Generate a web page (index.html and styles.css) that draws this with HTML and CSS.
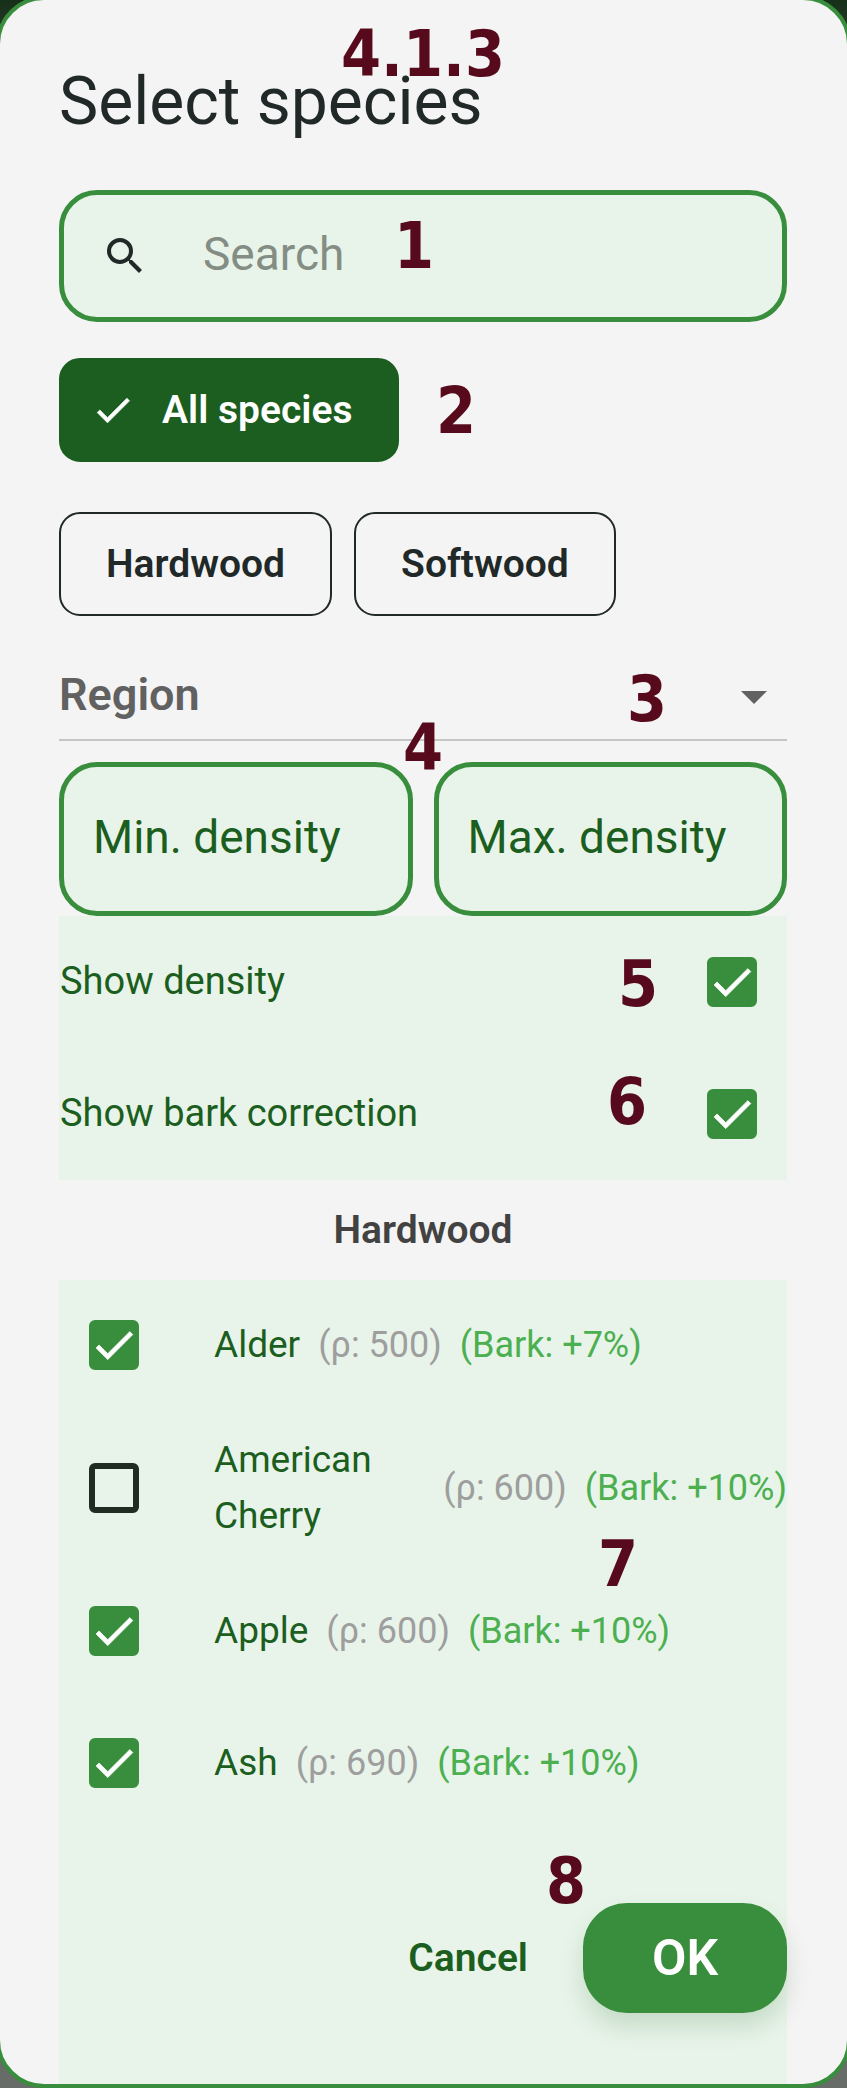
FILE: index.html
```html
<!DOCTYPE html>
<html lang="en">
<head>
<meta charset="utf-8">
<meta name="viewport" content="width=device-width, initial-scale=1">
<title>Select species</title>
<link rel="stylesheet" href="styles.css">
</head>
<body>
<svg class="defs" width="0" height="0" aria-hidden="true">
  <symbol id="tick" viewBox="0 0 24 24"><path d="M9 16.17 4.83 12l-1.42 1.41L9 19 21 7l-1.41-1.41z"/></symbol>
</svg>
<main class="dialog">
  <header class="title-bar">
    <h1 class="title">Select species</h1>
    <span class="marker marker-section">4.1.3</span>
  </header>

  <div class="search anchor">
    <svg class="search-icon" viewBox="0 0 24 24" aria-hidden="true"><path d="M15.5 14h-.79l-.28-.27A6.47 6.47 0 0 0 16 9.5 6.5 6.5 0 1 0 9.5 16c1.61 0 3.09-.59 4.23-1.57l.27.28v.79l5 4.99L20.49 19l-4.99-5zm-6 0a4.5 4.5 0 1 1 0-9 4.5 4.5 0 0 1 0 9z"/></svg>
    <input class="search-input" type="text" placeholder="Search" aria-label="Search">
    <span class="marker marker-1">1</span>
  </div>

  <div class="chips anchor">
    <div class="chip-row">
      <button class="chip chip-selected" type="button"><svg class="chip-tick" aria-hidden="true"><use href="#tick"/></svg>All species</button>
    </div>
    <div class="chip-row">
      <button class="chip" type="button">Hardwood</button>
      <button class="chip" type="button">Softwood</button>
    </div>
    <span class="marker marker-2">2</span>
  </div>

  <div class="region anchor">
    <select class="region-select" aria-label="Region"><option>Region</option></select>
    <svg class="region-arrow" viewBox="0 0 26 13" aria-hidden="true"><path d="M0 0h26L13 13z"/></svg>
    <span class="marker marker-3">3</span>
  </div>

  <div class="densities anchor">
    <input class="density" type="text" placeholder="Min. density" aria-label="Min. density">
    <input class="density" type="text" placeholder="Max. density" aria-label="Max. density">
    <span class="marker marker-4">4</span>
  </div>

  <section class="options anchor">
    <label class="option"><span>Show density</span>
      <span class="check"><input type="checkbox" checked><svg aria-hidden="true"><use href="#tick"/></svg></span></label>
    <label class="option"><span>Show bark correction</span>
      <span class="check"><input type="checkbox" checked><svg aria-hidden="true"><use href="#tick"/></svg></span></label>
    <span class="marker marker-5">5</span>
    <span class="marker marker-6">6</span>
  </section>

  <h2 class="group">Hardwood</h2>

  <section class="list anchor">
    <label class="species"><span class="check"><input type="checkbox" checked><svg aria-hidden="true"><use href="#tick"/></svg></span>
      <span class="name">Alder</span><span class="rho">(ρ: 500)</span><span class="bark">(Bark: +7%)</span></label>
    <label class="species"><span class="check"><input type="checkbox"><svg aria-hidden="true"><use href="#tick"/></svg></span>
      <span class="name">American Cherry</span><span class="rho">(ρ: 600)</span><span class="bark">(Bark: +10%)</span></label>
    <label class="species"><span class="check"><input type="checkbox" checked><svg aria-hidden="true"><use href="#tick"/></svg></span>
      <span class="name">Apple</span><span class="rho">(ρ: 600)</span><span class="bark">(Bark: +10%)</span></label>
    <label class="species"><span class="check"><input type="checkbox" checked><svg aria-hidden="true"><use href="#tick"/></svg></span>
      <span class="name">Ash</span><span class="rho">(ρ: 690)</span><span class="bark">(Bark: +10%)</span></label>
    <span class="marker marker-7">7</span>
    <footer class="actions anchor">
      <button class="cancel" type="button">Cancel</button>
      <button class="ok" type="button">OK</button>
      <span class="marker marker-8">8</span>
    </footer>
  </section>
</main>
</body>
</html>
```
FILE: styles.css
```css
* { box-sizing: border-box; }

html { overflow-x: hidden; }

body {
  margin: 0;
  overflow-x: hidden;
  font-family: Roboto, "Liberation Sans", sans-serif;
  color: #212828;
  background: linear-gradient(#17301a, #676c68 10%);
}

button, input, select { font-family: inherit; margin: 0; }

.defs { position: absolute; }

.dialog {
  display: flex;
  flex-direction: column;
  min-height: calc(100vh + 4px);
  margin: -4px -4px 0;
  padding: 0 60px 0 59px;
  border: 4px solid #388e3c;
  border-radius: 48px;
  background: #f4f4f4;
}

.anchor, .title-bar { position: relative; }

.title-bar { padding: 62px 0 48px; }
.title { margin: 0; font-size: 66px; font-weight: 400; line-height: 80px; }

.search {
  display: flex;
  align-items: center;
  height: 132px;
  padding: 0 37px;
  border: 5px solid #388e3c;
  border-radius: 38px;
  background: #e8f4e9;
}
.search-icon { width: 48px; height: 48px; flex: none; fill: #212828; }
.search-input {
  flex: 1;
  min-width: 0;
  margin-left: 54px;
  padding: 0 0 4px;
  border: 0;
  outline: 0;
  background: transparent;
  font-size: 46px;
}
.search-input::placeholder { color: #838d84; opacity: 1; }

.chips { display: flex; flex-direction: column; gap: 50px; padding: 36px 0 26px; }
.chip-row { display: flex; flex-wrap: wrap; gap: 22px; }
.chip {
  display: flex;
  align-items: center;
  height: 104px;
  padding: 0 45px;
  border: 2px solid #212828;
  border-radius: 21px;
  background: transparent;
  color: #212828;
  font-size: 39px;
  font-weight: 600;
}
.chip-selected { padding: 0 45px 0 30px; border-color: #1b5e20; background: #1b5e20; color: #fff; }
.chip-tick { width: 44px; height: 44px; margin-right: 27px; fill: #fff; stroke: #fff; stroke-width: 0.4; }

.region { display: flex; align-items: center; height: 99px; border-bottom: 2px solid #c4c6c4; }
.region-select {
  width: 100%;
  height: 97px;
  padding: 8px 0 0;
  border: 0;
  appearance: none;
  background: transparent;
  color: #616161;
  font-size: 45px;
  font-weight: 600;
}
.region-arrow { position: absolute; right: 20px; top: 49px; width: 26px; height: 13px; fill: #616161; pointer-events: none; }

.densities { display: flex; gap: 21px; margin-top: 21px; }
.density {
  flex: 1;
  min-width: 0;
  height: 154px;
  padding: 0 29px 4px;
  border: 5px solid #388e3c;
  border-radius: 38px;
  background: #e8f4e9;
  color: #1b5e20;
  font-size: 46px;
}
.density::placeholder { color: #1b5e20; opacity: 1; }

.options { background: #e8f4e9; }
.option {
  display: flex;
  align-items: center;
  justify-content: space-between;
  height: 132px;
  padding: 0 30px 0 1px;
  color: #1b5e20;
  font-size: 38px;
}
.option > span:first-child { padding-bottom: 2px; }

.check { display: grid; flex: none; width: 50px; height: 50px; }
.check input {
  grid-area: 1 / 1;
  width: 50px;
  height: 50px;
  appearance: none;
  border: 6px solid #1f2d20;
  border-radius: 6px;
}
.check input:checked { border-color: #388e3c; background: #388e3c; }
.check svg { grid-area: 1 / 1; place-self: center; width: 50px; height: 50px; fill: #fff; stroke: #fff; stroke-width: 0.4; visibility: hidden; pointer-events: none; }
.check input:checked + svg { visibility: visible; }

.group { margin: 0; font-size: 39px; font-weight: 600; line-height: 100px; text-align: center; color: #424242; }

.list { flex: 1; display: flex; flex-direction: column; background: #e8f4e9; }
.species {
  display: flex;
  align-items: center;
  min-height: 132px;
  padding: 20px 0 22px 30px;
  font-size: 36px;
  line-height: 56px;
}
.name { margin-left: 75px; color: #1b5e20; font-size: 37px; }
.rho, .bark { flex: none; margin-left: 18px; }
.rho { color: #9e9e9e; }
.bark { color: #4caf50; }

.actions { display: flex; justify-content: flex-end; align-items: center; gap: 22px; margin-top: auto; padding-bottom: 71px; }
.cancel { padding: 20px 33px; border: 0; background: transparent; color: #1b5e20; font-size: 39px; font-weight: 600; }
.ok {
  width: 204px;
  height: 110px;
  border: 0;
  border-radius: 44px;
  background: #388e3c;
  color: #fff;
  font-size: 50px;
  font-weight: 600;
  box-shadow: 0 14px 24px rgba(27, 94, 32, 0.16);
}

.marker {
  position: absolute;
  font-family: "DejaVu Sans Condensed", "DejaVu Sans", sans-serif;
  font-size: 64px;
  font-weight: 700;
  line-height: 64px;
  color: #570a1b;
  pointer-events: none;
}
.marker-section { left: 282px; top: 22px; }
.marker-1 { left: 330px; top: 19px; }
.marker-2 { left: 377px; top: 57px; }
.marker-3 { left: 568px; top: 25px; }
.marker-4 { left: 344px; top: -46px; }
.marker-5 { left: 559px; top: 36px; }
.marker-6 { left: 548px; top: 154px; }
.marker-7 { left: 539px; top: 252px; }
.marker-8 { left: 487px; top: -54px; }
```
